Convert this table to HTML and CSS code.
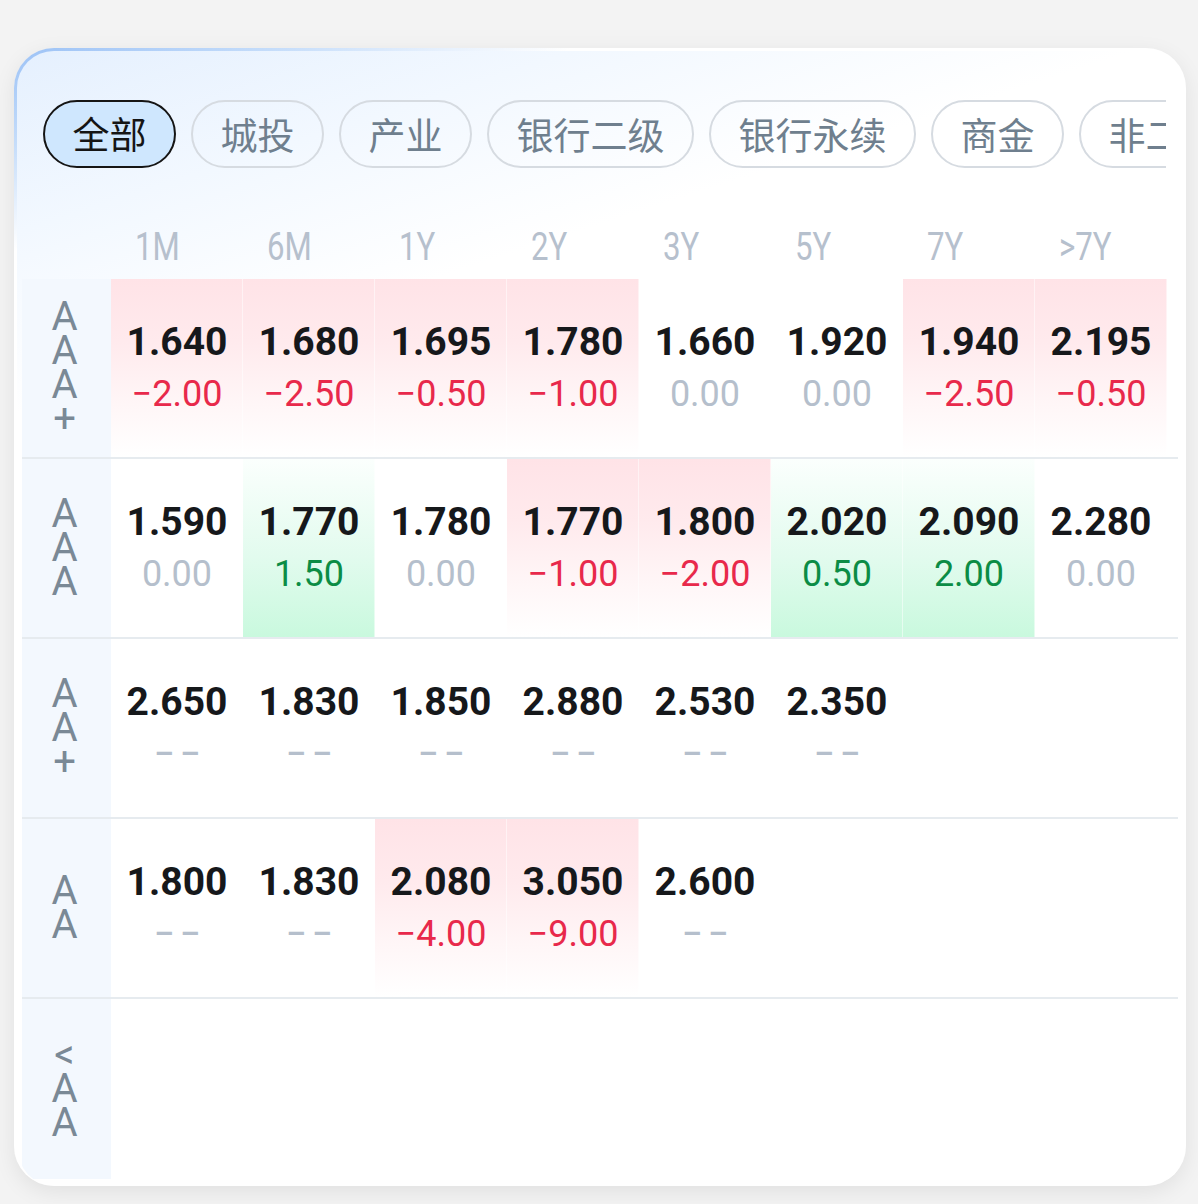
FILE: index.html
```html
<!DOCTYPE html>
<html lang="zh-CN">
<head>
<meta charset="utf-8">
<title>收益率矩阵</title>
<link rel="stylesheet" href="styles.css">
</head>
<body>
<div class="card">
  <div class="chips-wrap">
    <div class="chips">
      <div class="chip active">全部</div>
      <div class="chip">城投</div>
      <div class="chip">产业</div>
      <div class="chip">银行二级</div>
      <div class="chip">银行永续</div>
      <div class="chip">商金</div>
      <div class="chip">非二永</div>
    </div>
  </div>
  <div class="table">
    <div class="thead">
      <div class="corner"></div>
      <div class="th"><span class="thl">1M</span></div>
      <div class="th"><span class="thl">6M</span></div>
      <div class="th"><span class="thl">1Y</span></div>
      <div class="th"><span class="thl">2Y</span></div>
      <div class="th"><span class="thl">3Y</span></div>
      <div class="th"><span class="thl">5Y</span></div>
      <div class="th"><span class="thl">7Y</span></div>
      <div class="th"><span class="thl">&gt;7Y</span></div>
    </div>

    <div class="row">
      <div class="rating"><span class="rt">AAA+</span></div>
      <div class="cell up"><div class="val">1.640</div><div class="chg neg">−2.00</div></div>
      <div class="cell up"><div class="val">1.680</div><div class="chg neg">−2.50</div></div>
      <div class="cell up"><div class="val">1.695</div><div class="chg neg">−0.50</div></div>
      <div class="cell up"><div class="val">1.780</div><div class="chg neg">−1.00</div></div>
      <div class="cell"><div class="val">1.660</div><div class="chg zero">0.00</div></div>
      <div class="cell"><div class="val">1.920</div><div class="chg zero">0.00</div></div>
      <div class="cell up"><div class="val">1.940</div><div class="chg neg">−2.50</div></div>
      <div class="cell up"><div class="val">2.195</div><div class="chg neg">−0.50</div></div>
    </div>

    <div class="row">
      <div class="rating"><span class="rt">AAA</span></div>
      <div class="cell"><div class="val">1.590</div><div class="chg zero">0.00</div></div>
      <div class="cell down"><div class="val">1.770</div><div class="chg pos">1.50</div></div>
      <div class="cell"><div class="val">1.780</div><div class="chg zero">0.00</div></div>
      <div class="cell up"><div class="val">1.770</div><div class="chg neg">−1.00</div></div>
      <div class="cell up"><div class="val">1.800</div><div class="chg neg">−2.00</div></div>
      <div class="cell down"><div class="val">2.020</div><div class="chg pos">0.50</div></div>
      <div class="cell down"><div class="val">2.090</div><div class="chg pos">2.00</div></div>
      <div class="cell"><div class="val">2.280</div><div class="chg zero">0.00</div></div>
    </div>

    <div class="row">
      <div class="rating"><span class="rt">AA+</span></div>
      <div class="cell"><div class="val">2.650</div><div class="chg none">––</div></div>
      <div class="cell"><div class="val">1.830</div><div class="chg none">––</div></div>
      <div class="cell"><div class="val">1.850</div><div class="chg none">––</div></div>
      <div class="cell"><div class="val">2.880</div><div class="chg none">––</div></div>
      <div class="cell"><div class="val">2.530</div><div class="chg none">––</div></div>
      <div class="cell"><div class="val">2.350</div><div class="chg none">––</div></div>
      <div class="cell"></div>
      <div class="cell"></div>
    </div>

    <div class="row">
      <div class="rating"><span class="rt">AA</span></div>
      <div class="cell"><div class="val">1.800</div><div class="chg none">––</div></div>
      <div class="cell"><div class="val">1.830</div><div class="chg none">––</div></div>
      <div class="cell up"><div class="val">2.080</div><div class="chg neg">−4.00</div></div>
      <div class="cell up"><div class="val">3.050</div><div class="chg neg">−9.00</div></div>
      <div class="cell"><div class="val">2.600</div><div class="chg none">––</div></div>
      <div class="cell"></div>
      <div class="cell"></div>
      <div class="cell"></div>
    </div>

    <div class="row last">
      <div class="rating"><span class="rt">&lt;AA</span></div>
      <div class="cell"></div>
      <div class="cell"></div>
      <div class="cell"></div>
      <div class="cell"></div>
      <div class="cell"></div>
      <div class="cell"></div>
      <div class="cell"></div>
      <div class="cell"></div>
    </div>
  </div>
</div>
</body>
</html>
```

FILE: styles.css
```css
* { box-sizing: border-box; }

html, body {
  margin: 0;
  padding: 0;
  background: #f3f3f3;
}

body {
  width: 1198px;
  height: 1204px;
  overflow: hidden;
  font-family: Roboto, "Noto Sans CJK SC", sans-serif;
}

.card {
  margin: 48px 12px 0 14px;
  width: 1172px;
  height: 1138px;
  border-radius: 40px;
  border-style: solid;
  border-color: transparent;
  border-width: 3px 0 0 3px;
  background:
    linear-gradient(162deg, #e5f0fe 0%, #f2f8ff 12%, #ffffff 24%) padding-box,
    linear-gradient(160deg, #9cc2f6 0%, #c4dcfa 6%, #ffffff 13%) border-box;
  box-shadow: 0 6px 22px rgba(0, 0, 0, 0.08);
  padding: 49px 8px 7px 5px;
  overflow: hidden;
}

.chips-wrap {
  margin-left: 21px;
  width: 1123px;
  overflow: hidden;
}

.chips {
  display: flex;
  gap: 15px;
  height: 68px;
}

.chip {
  flex: none;
  height: 68px;
  padding: 0 27.5px;
  border: 2px solid #d6dbe1;
  border-radius: 34px;
  font-family: "Noto Sans CJK SC", sans-serif;
  font-size: 37px;
  line-height: 64px;
  color: #6f7f8e;
  white-space: nowrap;
}

.chip.active {
  background: #cfe7fe;
  border: 2.5px solid #151515;
  color: #151515;
  line-height: 63px;
}

.table {
  display: flex;
  flex-direction: column;
}

.thead {
  display: grid;
  grid-template-columns: 89px repeat(8, 132px);
  height: 111px;
  align-items: end;
  padding-bottom: 12px;
}

.th {
  padding-left: 24px;
  height: 40px;
}

.thl {
  display: inline-block;
  transform: scaleX(0.8);
  transform-origin: left center;
  font-family: Roboto, sans-serif;
  font-weight: 400;
  font-size: 39px;
  line-height: 40px;
  color: #b6c0cd;
  white-space: nowrap;
}

.row {
  display: grid;
  grid-template-columns: 89px repeat(8, 132px) 1fr;
  height: 180px;
  border-bottom: 2px solid #e6ebef;
  background: #ffffff;
}

.row.last {
  border-bottom: none;
}

.rating {
  grid-column: 1;
  background: #f3f8fe;
  display: flex;
  align-items: center;
  justify-content: center;
  padding-right: 4px;
}

.rt {
  display: block;
  width: 1em;
  word-break: break-all;
  text-align: center;
  font-family: Roboto, sans-serif;
  font-weight: 400;
  font-size: 40px;
  line-height: 34px;
  color: #7a8996;
}

.cell {
  display: flex;
  flex-direction: column;
  align-items: center;
  justify-content: center;
  box-shadow: inset -1px 0 0 rgba(255, 255, 255, 0.5);
}

.cell.up {
  background: linear-gradient(180deg, #ffe3e7 0%, #ffeaed 35%, #fff6f7 70%, #ffffff 100%);
}

.cell.down {
  background: linear-gradient(0deg, #c9f9de 0%, #e2fbee 45%, #fbfffd 100%);
}

.val {
  font-family: Roboto, sans-serif;
  font-weight: 700;
  font-size: 39px;
  line-height: 52px;
  color: #16181b;
  white-space: nowrap;
}

.chg {
  font-family: Roboto, sans-serif;
  font-weight: 400;
  font-size: 36px;
  line-height: 52px;
  white-space: nowrap;
}

.chg.neg { color: #e8294b; }
.chg.pos { color: #0b8c45; }
.chg.zero { color: #b5bfcc; }
.chg.none {
  color: #b5bfcc;
  font-weight: 700;
  font-size: 30px;
  letter-spacing: 7px;
  padding-left: 7px;
}
```
